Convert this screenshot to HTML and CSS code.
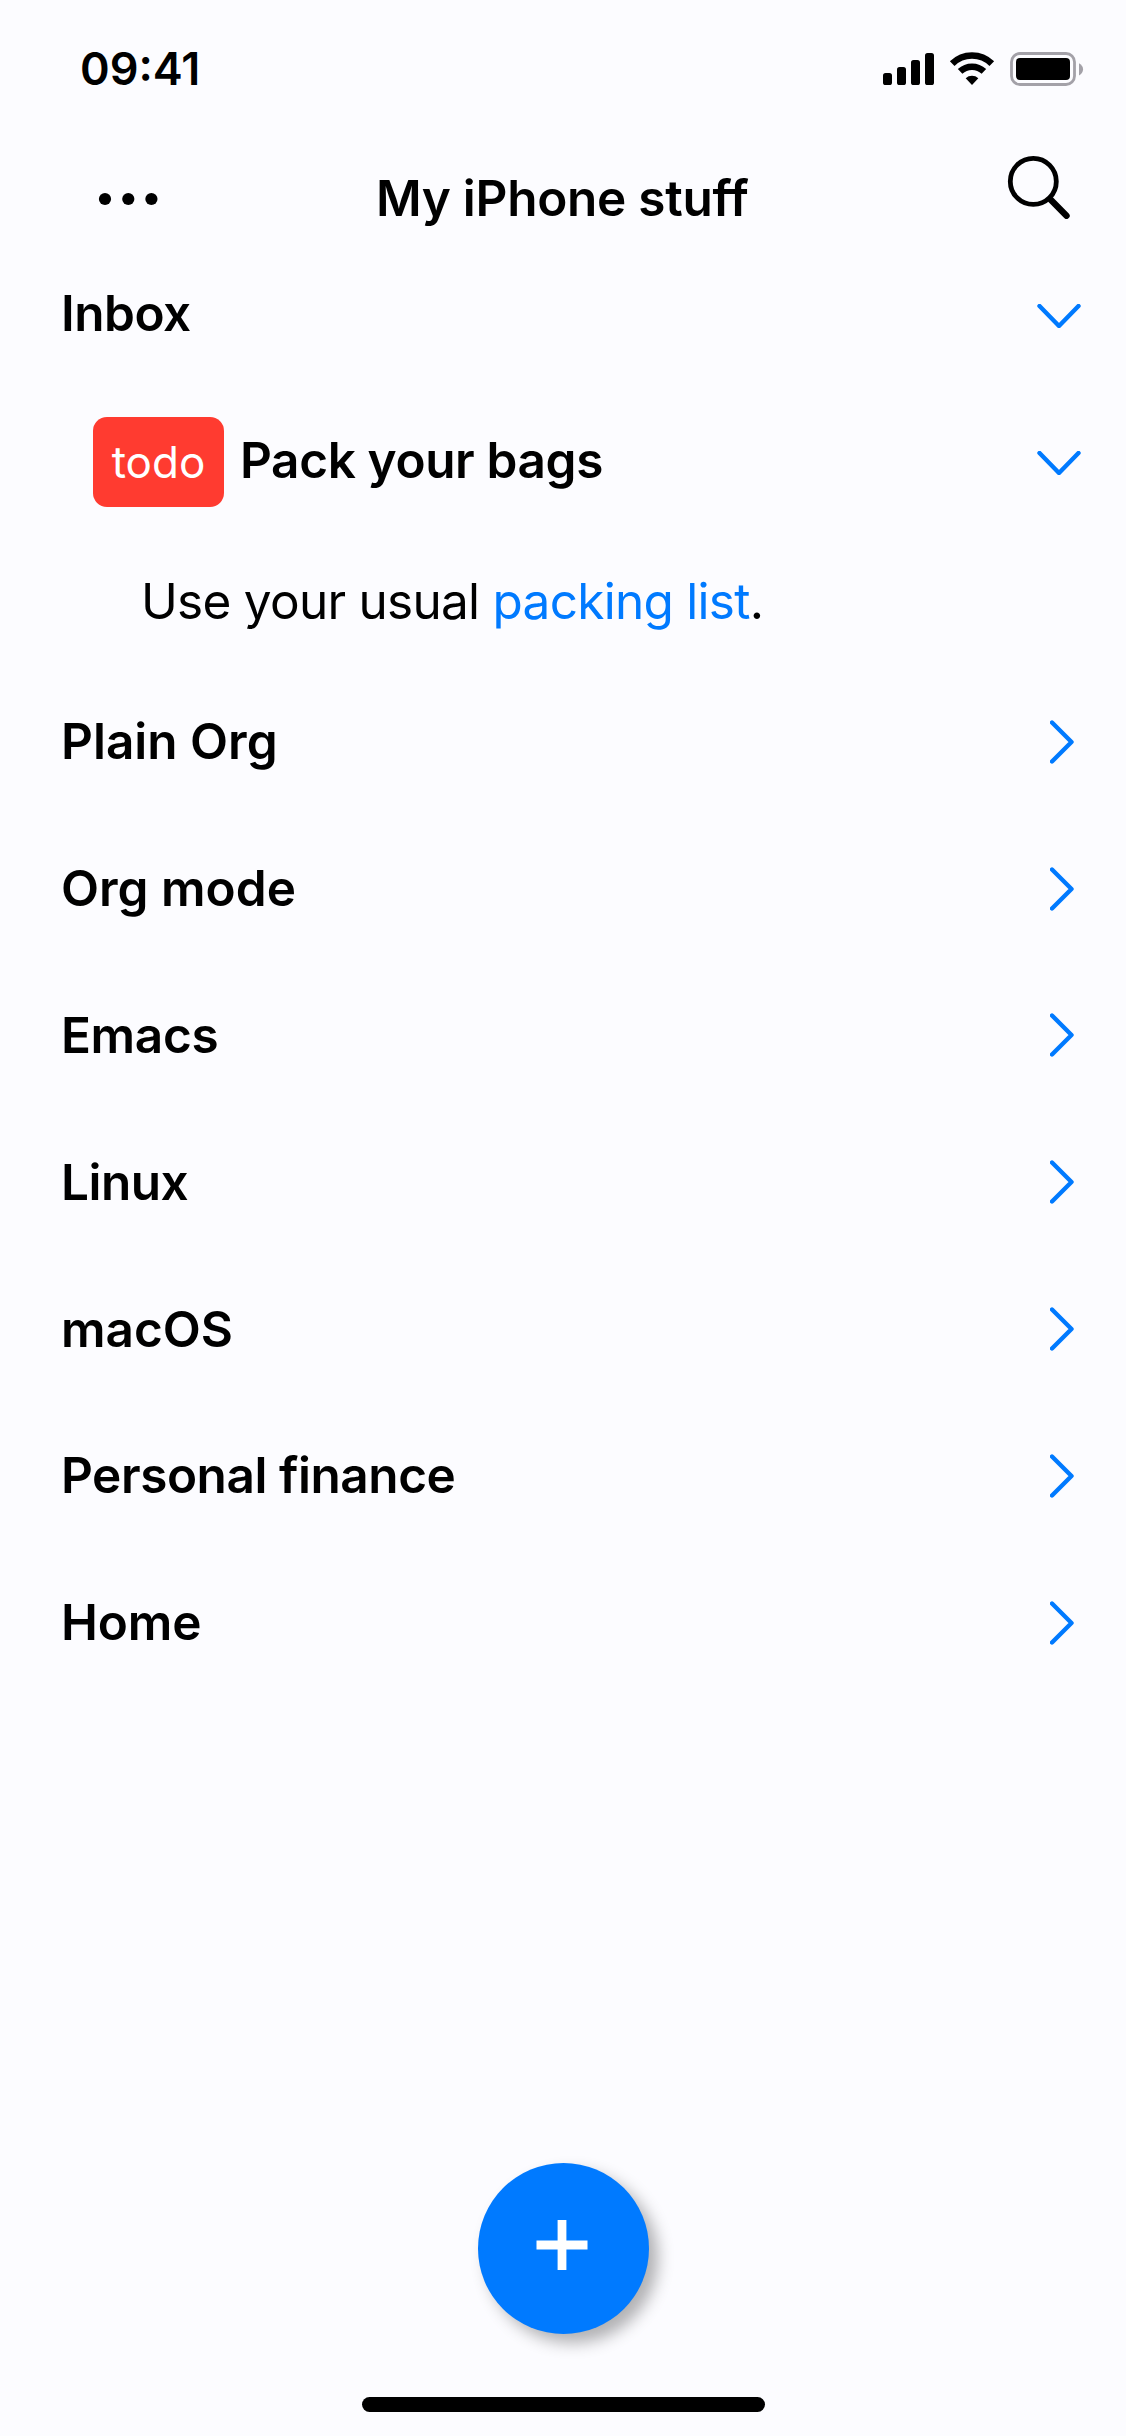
FILE: index.html
```html
<!DOCTYPE html>
<html lang="en">
<head>
<meta charset="utf-8">
<title>My iPhone stuff</title>
<link rel="stylesheet" href="styles.css">
</head>
<body>
<div class="screen">
  <header class="status">
    <span class="time">09:41</span>
    <svg class="indicators" width="202" height="36" viewBox="0 0 202 36" aria-hidden="true">
      <g>
        <rect x="1" y="21" width="9" height="12" rx="2.6"/>
        <rect x="15" y="15" width="9" height="18" rx="2.6"/>
        <rect x="29" y="8" width="9" height="25" rx="2.6"/>
        <rect x="43" y="1" width="9" height="32" rx="2.6"/>
      </g>
      <g fill="none" stroke="#000" stroke-width="6.6">
        <path d="M70.2 11.6a28.2 28.2 0 0 1 39.6 0"/>
        <path d="M78.1 19.4a17.4 17.4 0 0 1 23.8 0"/>
      </g>
      <path d="M83.7 26.3a9.3 9.3 0 0 1 12.6 0L90 33z"/>
      <rect x="129.5" y="1.5" width="63" height="31" rx="8.5" fill="none" stroke="#a3a1a8" stroke-width="2.8"/>
      <rect x="134" y="6" width="54" height="22" rx="4"/>
      <path d="M197 11.2c5.4 2.6 5.4 9.6 0 12.2z" fill="#a3a1a8"/>
    </svg>
  </header>

  <nav class="navbar">
    <svg class="menu" width="60" height="16" viewBox="0 0 60 16" aria-label="Menu">
      <circle cx="7" cy="8" r="6.1"/><circle cx="30.3" cy="8" r="6.1"/><circle cx="53.4" cy="8" r="6.1"/>
    </svg>
    <h1 class="title">My iPhone stuff</h1>
    <svg class="search" width="66" height="66" viewBox="0 0 66 66" fill="none" stroke="#000" stroke-linecap="round" aria-label="Search">
      <circle cx="29.3" cy="28.4" r="23" stroke-width="4.8"/>
      <path d="M46.5 46.5 62.500 62.800" stroke-width="6.4"/>
    </svg>
  </nav>

  <main class="outline">
    <div class="row"><span class="heading inbox">Inbox</span><svg class="chevron down" viewBox="0 0 44 24"><path d="M2.5 2 22 22 41.5 2"/></svg></div>
    <div class="row nested">
      <span class="badge">todo</span>
      <span class="heading pack">Pack your bags</span>
      <svg class="chevron down" viewBox="0 0 44 24"><path d="M2.5 2 22 22 41.5 2"/></svg>
    </div>
    <p class="body">Use your usual <a class="link">packing list</a>.</p>
    <div class="row"><span class="heading">Plain Org</span><svg class="chevron" viewBox="0 0 24 44"><path d="M2 2.5 21.5 22 2 41.5"/></svg></div>
    <div class="row"><span class="heading">Org mode</span><svg class="chevron" viewBox="0 0 24 44"><path d="M2 2.5 21.5 22 2 41.5"/></svg></div>
    <div class="row"><span class="heading emacs">Emacs</span><svg class="chevron" viewBox="0 0 24 44"><path d="M2 2.5 21.5 22 2 41.5"/></svg></div>
    <div class="row"><span class="heading linux">Linux</span><svg class="chevron" viewBox="0 0 24 44"><path d="M2 2.5 21.5 22 2 41.5"/></svg></div>
    <div class="row"><span class="heading">macOS</span><svg class="chevron" viewBox="0 0 24 44"><path d="M2 2.5 21.5 22 2 41.5"/></svg></div>
    <div class="row"><span class="heading finance">Personal finance</span><svg class="chevron" viewBox="0 0 24 44"><path d="M2 2.5 21.5 22 2 41.5"/></svg></div>
    <div class="row"><span class="heading home">Home</span><svg class="chevron" viewBox="0 0 24 44"><path d="M2 2.5 21.5 22 2 41.5"/></svg></div>
  </main>

  <footer class="bottom">
    <div class="add">
      <svg width="52" height="52" viewBox="0 0 52 52" aria-label="Add"><path d="M26 1v50M.5 26h51" stroke="#fff" stroke-width="8.8"/></svg>
    </div>
    <div class="home-indicator"></div>
  </footer>
</div>
</body>
</html>
```
FILE: styles.css
```css
* { box-sizing: border-box; }

body {
  margin: 0;
  background: #fcfcff;
  color: #000;
  font-family: Inter, "Liberation Sans", sans-serif;
}

.screen {
  width: 1126px;
  height: 2436px;
  display: flex;
  flex-direction: column;
}

.status {
  height: 138px;
  padding: 0 42px 0 80px;
  display: flex;
  justify-content: space-between;
  align-items: center;
}

.time {
  font-size: 45px;
  font-weight: 600;
  margin-top: -1px;
}

.indicators { margin-top: 2px; }

.navbar {
  height: 102px;
  padding: 18px 56px 0 98px;
  display: grid;
  grid-template-columns: 278px 1fr 270px;
  align-items: center;
}

.menu { margin-top: 2px; }

.title {
  margin: 0;
  font-size: 49.5px;
  font-weight: 600;
  line-height: 60px;
  letter-spacing: -0.27px;
  white-space: nowrap;
}

.search {
  justify-self: end;
  margin-top: -25px;
}

.row {
  height: 146.8px;
  padding: 0 45px 0 61px;
  display: flex;
  align-items: center;
}

.nested { padding-left: 93px; }

.heading {
  flex: 1;
  font-size: 49.5px;
  font-weight: 600;
  line-height: 60px;
  white-space: nowrap;
}

.inbox { letter-spacing: -0.5px; }
.pack { letter-spacing: -0.37px; margin-left: 16px; }
.emacs { letter-spacing: -0.35px; }
.linux { letter-spacing: -0.5px; }
.finance { letter-spacing: -0.45px; }
.home { letter-spacing: -0.1px; }

.badge {
  width: 131px;
  height: 90px;
  margin-top: 4px;
  border-radius: 14px;
  background: #ff3b30;
  color: #fff;
  font-size: 44px;
  line-height: 90px;
  text-align: center;
}

.chevron {
  width: 24px;
  height: 44px;
  margin-right: 7px;
  margin-top: 1px;
  fill: none;
  stroke: #007aff;
  stroke-width: 4.4;
  stroke-linecap: round;
  stroke-linejoin: round;
}

.down {
  width: 44px;
  height: 24px;
  margin-right: 0;
  margin-top: 6px;
}

.body {
  height: 134.4px;
  margin: 0;
  padding: 0 0 0 141px;
  font-size: 49.5px;
  line-height: 134px;
  letter-spacing: -0.73px;
  white-space: nowrap;
}

.link { color: #007aff; }

.bottom {
  margin-top: auto;
  padding-bottom: 24px;
  display: flex;
  flex-direction: column;
  align-items: center;
  gap: 63px;
}

.add {
  width: 171px;
  height: 171px;
  padding: 0 2px 8px 0;
  border-radius: 50%;
  background: #007aff;
  box-shadow: 9px 9px 16px rgba(0, 0, 0, 0.3);
  display: flex;
  align-items: center;
  justify-content: center;
}

.home-indicator {
  width: 403px;
  height: 15px;
  border-radius: 8px;
  background: #000;
}
```
